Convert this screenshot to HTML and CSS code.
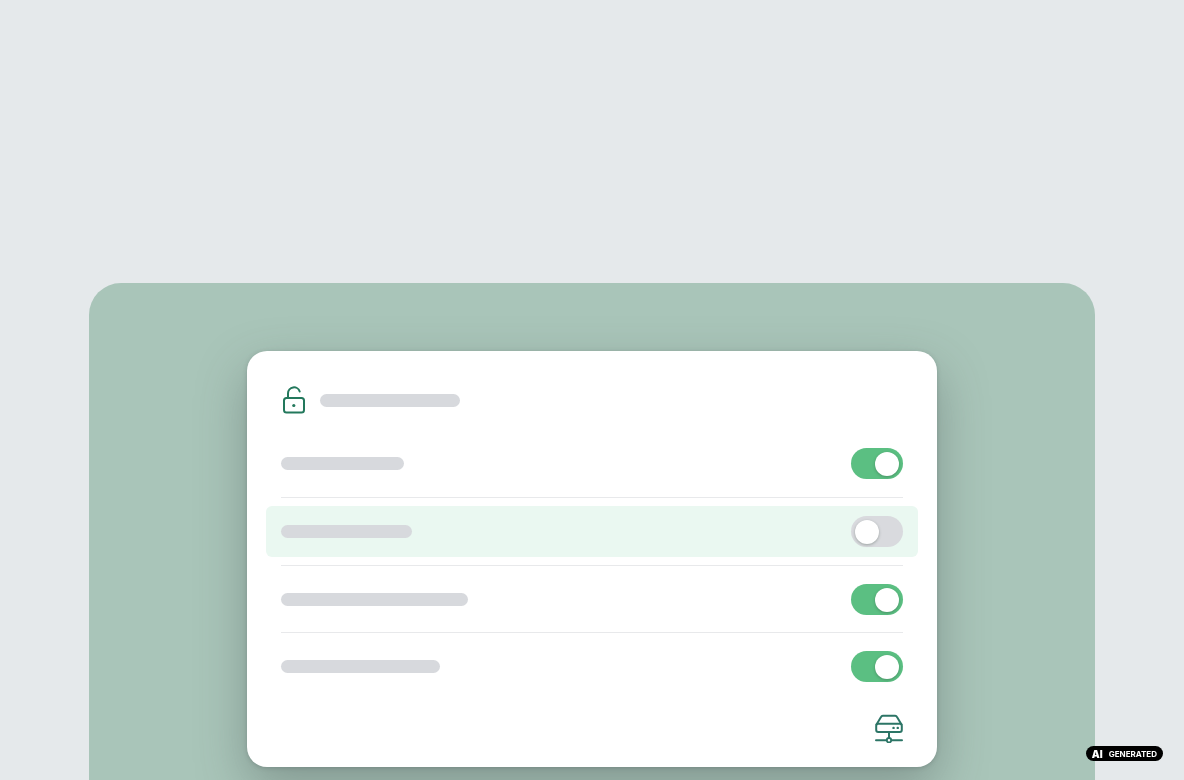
FILE: index.html
```html
<!DOCTYPE html>
<html lang="en">
<head>
    <meta charset="utf-8">
    <meta name="viewport" content="width=device-width, initial-scale=1">
    <title>Settings</title>
    <link rel="stylesheet" href="styles.css">
</head>
<body>
    <main class="stage">
        <form class="card">
            <div class="card-header">
                <svg class="lock-icon" viewBox="0 0 25 28" fill="none" stroke="#23785c" stroke-width="2" stroke-linecap="round">
                    <rect x="3" y="12" width="20" height="14.500" rx="2.500"/>
                    <path d="M7 12V7.200A6 6 0 0 1 18.700 5.500"/>
                    <circle cx="12.800" cy="19.500" r="1.600" fill="#23785c" stroke="none"/>
                </svg>
                <span class="bar bar-title"></span>
            </div>
            <div class="row">
                <label for="option1" class="bar bar-1"></label>
                <input type="checkbox" id="option1" class="toggle" checked>
            </div>
            <div class="row row-active">
                <label for="option2" class="bar bar-2"></label>
                <input type="checkbox" id="option2" class="toggle">
            </div>
            <div class="row">
                <label for="option3" class="bar bar-3"></label>
                <input type="checkbox" id="option3" class="toggle" checked>
            </div>
            <div class="row">
                <label for="option4" class="bar bar-4"></label>
                <input type="checkbox" id="option4" class="toggle" checked>
            </div>
            <div class="card-footer">
                <svg class="server-icon" viewBox="0 0 28 29" fill="none" stroke="#2c7566" stroke-width="2" stroke-linecap="round" stroke-linejoin="round">
                    <path d="M1.500 10.500L6 3Q6.600 1.800 7.800 1.800H20.200Q21.400 1.800 22 3L26.500 10.500"/>
                    <rect x="1.200" y="9.800" width="25.600" height="8.200" rx="2"/>
                    <path d="M14 18V23.500M1 26.200H11.500M16.500 26.200H27"/>
                    <circle cx="14" cy="26.200" r="2.200" stroke-width="1.800"/>
                    <path d="M18.500 13.900h.1M22.700 13.900h.1" stroke-width="2.400"/>
                </svg>
            </div>
        </form>
    </main>
    <div class="badge"><b>AI</b><span>GENERATED</span></div>
</body>
</html>
```

FILE: styles.css
```css
* {
    box-sizing: border-box;
}
body {
    margin: 0;
    min-height: 100vh;
    display: flex;
    flex-direction: column;
    align-items: center;
    padding-top: 283px;
    background: #e5e9eb;
    font-family: Inter, "Liberation Sans", sans-serif;
}
.stage {
    flex: 1;
    width: 85%;
    padding: 68px 24px 12px;
    border-radius: 32px 32px 0 0;
    background: #a9c5b9;
    overflow: hidden;
}
.card {
    max-width: 690px;
    margin: 0 auto;
    padding: 35px 34px 24px;
    border-radius: 20px;
    background: #fff;
    box-shadow: 0 20px 50px rgba(65, 75, 75, 0.38), 0 1px 4px rgba(65, 75, 75, 0.25);
}
.card-header {
    display: flex;
    align-items: center;
    gap: 14px;
    margin-bottom: 16px;
}
.lock-icon {
    width: 25px;
    height: 28px;
}
.bar {
    height: 13px;
    border-radius: 7px;
    background: #d7d9dd;
}
.bar-title {
    width: 140px;
}
.bar-1 {
    width: 123px;
}
.bar-2 {
    width: 131px;
}
.bar-3 {
    width: 187px;
}
.bar-4 {
    width: 159px;
}
.row {
    display: flex;
    align-items: center;
    justify-content: space-between;
    height: 67px;
}
.row + .row {
    border-top: 1px solid #e8e9eb;
}
.row + .row-active {
    border-top: 0;
    height: 51px;
    margin: 8px -15px;
    padding: 0 15px;
    border-radius: 6px;
    background: #eaf8f1;
}
.row:has(+ .row-active) {
    height: 68px;
    border-bottom: 1px solid #e8e9eb;
}
.toggle {
    appearance: none;
    width: 52px;
    height: 31px;
    margin: 0;
    padding: 4px;
    border-radius: 16px;
    background: #d9dade;
    cursor: pointer;
}
.toggle::before {
    content: "";
    display: block;
    width: 24px;
    height: 24px;
    border-radius: 50%;
    background: #fff;
    box-shadow: 0 1px 3px rgba(40, 60, 50, 0.35);
}
.toggle:checked {
    background: #5bbf82;
}
.toggle:checked::before {
    margin-left: auto;
}
.card-footer {
    display: flex;
    justify-content: flex-end;
    padding-top: 15px;
}
.server-icon {
    width: 28px;
    height: 29px;
}
.badge {
    position: fixed;
    right: 21px;
    bottom: 19px;
    display: flex;
    align-items: center;
    gap: 6px;
    height: 15px;
    padding: 0 6px;
    border-radius: 8px;
    background: #000;
    color: #fff;
    font-size: 8px;
    font-weight: 700;
}
.badge b {
    font-size: 10px;
}
```
